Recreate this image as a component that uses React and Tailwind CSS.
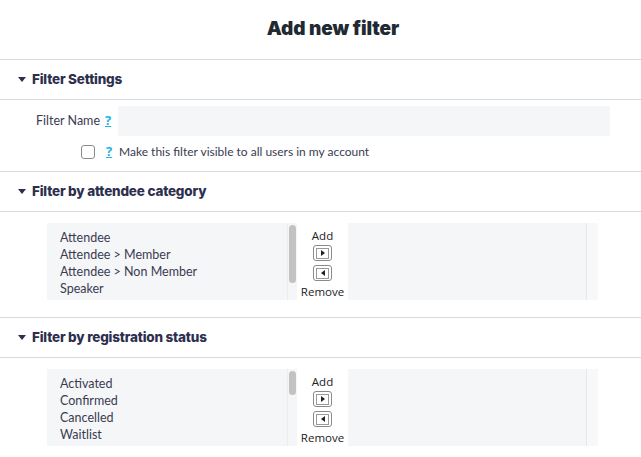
import React from "react";

const Caret = () => (
  <svg width="8" height="5" viewBox="0 0 8 5" className="mr-[6px]">
    <path d="M0 0 L8 0 L4 5 Z" fill="#2d2f4e" />
  </svg>
);

const SectionHeader = ({ children }) => (
  <div className="h-[40px] flex items-center pl-[18px] border-b border-[#d5dae2]">
    <Caret />
    <span className="text-[13.5px] font-extrabold text-[#2d2f4e] tracking-[-0.2px]" style={{ fontFamily: "Inter, 'Noto Sans', sans-serif" }}>
      {children}
    </span>
  </div>
);

const Help = () => (
  <span className="text-[13px] font-bold text-[#1fb1e6] underline leading-none" style={{ fontFamily: "'Open Sans', sans-serif" }}>?</span>
);

const ArrowBtn = ({ dir }) => (
  <div className="w-[19px] h-[16px] border border-[#8a8a8a] rounded-[3px] flex items-center justify-center bg-white">
    <div className="w-[13px] h-[11px] border border-[#9a9a9a] flex items-center justify-center">
      <svg width="4" height="6" viewBox="0 0 4 6">
        {dir === "right" ? <path d="M0 0 L4 3 L0 6 Z" fill="#222" /> : <path d="M4 0 L0 3 L4 6 Z" fill="#222" />}
      </svg>
    </div>
  </div>
);

const DualList = ({ items, thumbH }) => (
  <div className="flex pl-[47px] pt-[11px] pb-[17px]">
    <div className="w-[250px] h-[77px] bg-[#f5f6f8] flex relative">
      <div className="flex-1 pl-[13px] pt-[6px] text-[12.5px] leading-[17px] text-[#3a3b52]" style={{ fontFamily: "Lato, 'Noto Sans', sans-serif" }}>
        {items.map((it) => (
          <div key={it}>{it}</div>
        ))}
      </div>
      <div className="w-[10px] border-l border-[#ececf0] pt-[2px] flex justify-center">
        <div className="w-[7px] bg-[#c2c2c2] rounded-full" style={{ height: thumbH }} />
      </div>
    </div>
    <div className="w-[51px] flex flex-col items-center pt-[6px] text-[11.5px] text-[#222] leading-[14px]" style={{ fontFamily: "'Open Sans', sans-serif" }}>
      <div>Add</div>
      <div className="mt-[2px]"><ArrowBtn dir="right" /></div>
      <div className="mt-[4px]"><ArrowBtn dir="left" /></div>
      <div className="mt-[4px]">Remove</div>
    </div>
    <div className="w-[250px] h-[77px] bg-[#f5f6f8] flex justify-end">
      <div className="w-[12px] border-l border-[#e6e7ec] bg-[#f8f8fa]" />
    </div>
  </div>
);

export default function App() {
  return (
    <div className="w-[641px] h-[457px] bg-white overflow-hidden" style={{ fontFamily: "Lato, 'Noto Sans', sans-serif" }}>
      <div className="h-[60px] flex items-center justify-center pl-[25px] border-b border-[#d5dae2]">
        <span className="text-[19px] font-black text-[#1f2a33] tracking-[-0.1px]" style={{ fontFamily: "Inter, sans-serif" }}>Add new filter</span>
      </div>
      <SectionHeader>Filter Settings</SectionHeader>
      <div className="border-b border-[#d5dae2] pt-[6px] pb-[9px]">
        <div className="flex items-center">
          <div className="w-[100px] text-right text-[12.5px] text-[#3a3b52]">Filter Name</div>
          <div className="w-[18px] pl-[5px] -mt-[4px]"><Help /></div>
          <div className="w-[492px] h-[30px] bg-[#f5f6f8]" />
        </div>
        <div className="flex items-center mt-[6px]">
          <div className="w-[81px]" />
          <div className="w-[14px] h-[14px] border border-[#8d8d8d] rounded-[3px] bg-white" />
          <div className="w-[24px] pl-[11px] -mt-[4px]"><Help /></div>
          <div className="text-[12px] text-[#3a3b52]">Make this filter visible to all users in my account</div>
        </div>
      </div>
      <SectionHeader>Filter by attendee category</SectionHeader>
      <div className="border-b border-[#d5dae2]">
        <DualList items={["Attendee", "Attendee > Member", "Attendee > Non Member", "Speaker"]} thumbH={58} />
      </div>
      <SectionHeader>Filter by registration status</SectionHeader>
      <DualList items={["Activated", "Confirmed", "Cancelled", "Waitlist"]} thumbH={24} />
    </div>
  );
}
